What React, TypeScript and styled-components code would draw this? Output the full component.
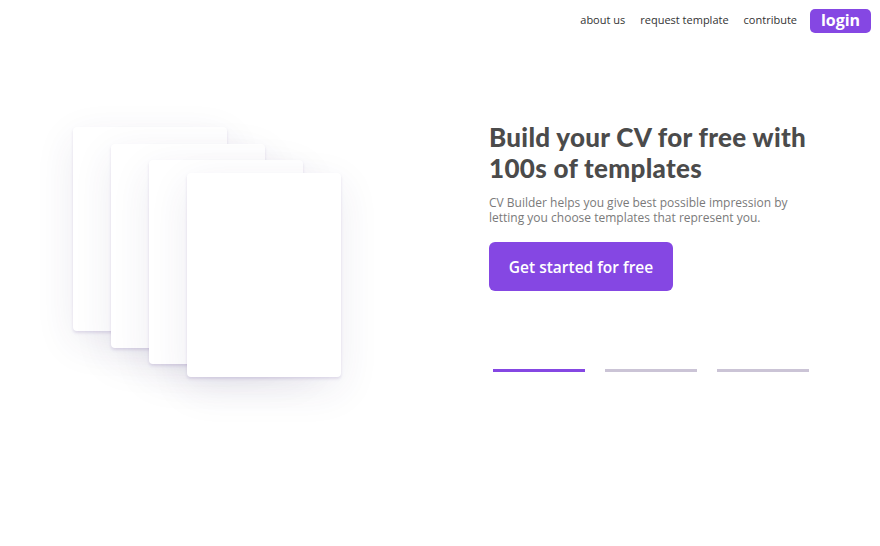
import styled, { createGlobalStyle } from 'styled-components';

const GlobalStyle = createGlobalStyle`
  body {
    margin: 0;
    background: #fff;
    font-family: 'Open Sans', 'Noto Sans', sans-serif;
  }
`;

const Page = styled.div`
  width: 880px;
  height: 546px;
  overflow: hidden;
`;

const Nav = styled.nav`
  display: flex;
  justify-content: flex-end;
  align-items: center;
  gap: 15px;
  padding: 8px 9px 0 0;
  height: 26px;
`;

const NavLink = styled.a`
  font-size: 11px;
  color: #333;
  text-decoration: none;
  padding-bottom: 3px;
`;

const LoginButton = styled.button`
  margin-left: -2px;
  width: 61px;
  height: 24px;
  border: none;
  border-radius: 5px;
  background: #8547e3;
  color: #fff;
  font-family: 'Open Sans', sans-serif;
  font-size: 16px;
  font-weight: 700;
  line-height: 1;
  padding: 0 0 2px;
`;

const Hero = styled.main`
  display: flex;
  align-items: flex-start;
  padding-top: 91px;
`;

const Stack = styled.div`
  position: relative;
  width: 489px;
  height: 270px;
  flex-shrink: 0;
`;

const sheetTops = [2, 19, 35, 48];

const Sheet = styled.div<{ $i: number }>`
  position: absolute;
  left: ${(p) => 73 + p.$i * 38}px;
  top: ${(p) => sheetTops[p.$i]}px;
  width: 154px;
  height: 204px;
  background: #fff;
  border-radius: 4px;
  box-shadow: 0 2px 3px rgba(110, 90, 160, 0.18), 0 12px 40px rgba(60, 40, 100, 0.09);
`;

const Copy = styled.section`
  display: flex;
  flex-direction: column;
`;

const Title = styled.h1`
  margin: -3px 0 0;
  font-family: 'Lato', sans-serif;
  font-size: 26px;
  line-height: 31px;
  font-weight: 900;
  color: #4b4b4b;
  letter-spacing: 0.3px;
`;

const Lead = styled.p`
  margin: 12px 0 0;
  width: 310px;
  font-size: 12px;
  line-height: 14.5px;
  color: #7a7a7a;
`;

const Cta = styled.button`
  margin-top: 17px;
  width: 184px;
  height: 49px;
  border: none;
  border-radius: 6px;
  background: #8547e3;
  color: #fff;
  font-family: 'Open Sans', sans-serif;
  font-size: 15.5px;
  font-weight: 600;
`;

const Dots = styled.div`
  display: flex;
  gap: 20px;
  margin: 78px 0 0 4px;
`;

const Dot = styled.span<{ $active?: boolean }>`
  width: 92px;
  height: 3px;
  background: ${(p) => (p.$active ? '#8547e3' : '#cbc4d6')};
`;

export default function App() {
  return (
    <Page>
      <GlobalStyle />
      <Nav>
        <NavLink href="#">about us</NavLink>
        <NavLink href="#">request template</NavLink>
        <NavLink href="#">contribute</NavLink>
        <LoginButton>login</LoginButton>
      </Nav>
      <Hero>
        <Stack>
          {[0, 1, 2, 3].map((i) => (
            <Sheet key={i} $i={i} />
          ))}
        </Stack>
        <Copy>
          <Title>
            Build your CV for free with
            <br />
            100s of templates
          </Title>
          <Lead>
            CV Builder helps you give best possible impression by letting you
            choose templates that represent you.
          </Lead>
          <Cta>Get started for free</Cta>
          <Dots>
            <Dot $active />
            <Dot />
            <Dot />
          </Dots>
        </Copy>
      </Hero>
    </Page>
  );
}
